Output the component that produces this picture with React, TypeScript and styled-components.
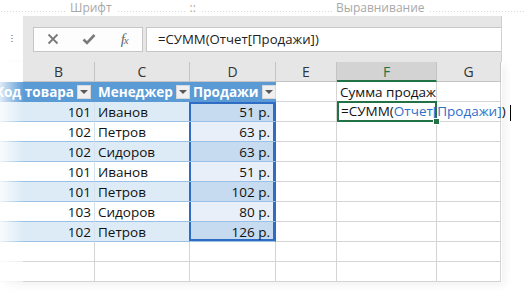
import React from "react";
import styled, { createGlobalStyle, css } from "styled-components";

const GlobalStyle = createGlobalStyle`
  html, body { margin: 0; padding: 0; background: #fff; }
  body {
    width: 524px;
    height: 294px;
    overflow: hidden;
    font-family: "Open Sans", "Noto Sans", sans-serif;
  }
`;

const Shot = styled.div`
  position: relative;
  width: 524px;
  height: 294px;
  overflow: hidden;
  background: #fff;
`;

/* ribbon group labels */
const RibbonStrip = styled.div`
  height: 16px;
  display: flex;
  align-items: center;
  font-size: 12px;
  color: #a8a8a8;
  background-image: linear-gradient(to right, #d9d9d9 50%, transparent 50%);
  background-size: 3px 1px;
  background-repeat: repeat-x;
  background-position: 25px 11px;
`;

const RibbonLabel = styled.span<{ $left: number }>`
  margin-left: ${(p) => p.$left}px;
  padding: 0 4px;
  background: #fff;
  line-height: 16px;
`;

/* formula bar */
const FormulaRow = styled.div`
  display: flex;
  height: 46px;
`;

const Gutter = styled.div`
  width: 23px;
  display: flex;
  align-items: center;
  justify-content: center;
`;

const Grip = styled.div`
  width: 2px;
  height: 9px;
  background-image: linear-gradient(to bottom, #9aaac4 50%, transparent 50%);
  background-size: 2px 3px;
`;

const FormulaArea = styled.div`
  width: 479px;
  background: #e6e6e6;
  display: flex;
  align-items: center;
  padding-left: 10px;
  box-sizing: border-box;
  border-right: 1px solid #d0d0d0;
`;

const NameBox = styled.div`
  width: 110px;
  height: 25px;
  box-sizing: border-box;
  border: 1px solid #c6c6c6;
  background: #fdfdfd;
  display: flex;
  padding-left: 1px;
`;

const BarButton = styled.div`
  width: 36px;
  display: flex;
  align-items: center;
  justify-content: center;
  color: #777;
`;

const Fx = styled.span`
  font-family: "Liberation Serif", serif;
  font-style: italic;
  font-size: 15px;
  color: #666;
  letter-spacing: -1px;
  small {
    font-size: 11px;
  }
`;

const FormulaInput = styled.div`
  flex: 1;
  height: 25px;
  margin-left: 3px;
  box-sizing: border-box;
  border: 1px solid #c6c6c6;
  border-right: none;
  background: #fff;
  padding-left: 11px;
  display: flex;
  align-items: center;
  font-size: 13.2px;
  color: #222;
`;

/* sheet */
const Sheet = styled.div`
  display: grid;
  grid-template-columns: 23px 72px 95px 86px 61px 100px 64px;
  grid-auto-rows: 20px;
  width: 501px;
  font-size: 13.5px;
  color: #111;
`;

const ColHead = styled.div<{ $active?: boolean; $blank?: boolean }>`
  display: flex;
  align-items: center;
  justify-content: center;
  box-sizing: border-box;
  background: ${(p) => (p.$blank ? "#fff" : p.$active ? "#d3d3d3" : "#e6e6e6")};
  border-right: ${(p) => (p.$blank ? "none" : "1px solid #c4c4c4")};
  border-bottom: ${(p) =>
    p.$blank ? "none" : p.$active ? "2px solid #217346" : "1px solid #c4c4c4"};
  color: ${(p) => (p.$active ? "#217346" : "#333")};
  font-size: 14px;
`;

type CellProps = {
  $bg?: string;
  $line?: string;
  $vline?: string;
  $right?: boolean;
  $head?: boolean;
  $selSide?: boolean;
  $selTop?: boolean;
  $selBottom?: boolean;
};

const Cell = styled.div<CellProps>`
  position: relative;
  display: flex;
  align-items: center;
  justify-content: ${(p) => (p.$right ? "flex-end" : "flex-start")};
  box-sizing: border-box;
  padding: 0 3px;
  white-space: nowrap;
  background: ${(p) => p.$bg || "#fff"};
  border-bottom: 1px solid ${(p) => p.$line || "#d4d4d4"};
  border-right: 1px solid ${(p) => p.$vline || "#d4d4d4"};
  ${(p) =>
    p.$head &&
    css`
      color: #fff;
      font-weight: 700;
      border-right-color: ${p.$bg};
    `}
  ${(p) =>
    p.$selSide &&
    css`
      box-shadow: inset 2px 0 0 #2f6cc4, inset -2px 0 0 #2f6cc4
        ${p.$selTop ? ", inset 0 2px 0 #2f6cc4" : ""}
        ${p.$selBottom ? ", inset 0 -2px 0 #2f6cc4" : ""};
      border-right-color: #2f6cc4;
      margin-left: -1px;
      padding-right: 5px;
    `}
`;

const Edge = styled.div<{ $bg?: string; $line?: string }>`
  background: ${(p) => p.$bg || "#fff"};
  border-bottom: 1px solid ${(p) => p.$line || "#ececec"};
  box-sizing: border-box;
`;

const FilterButton = styled.span`
  width: 14px;
  height: 14px;
  margin-left: 3px;
  box-sizing: border-box;
  background: #f0f0f0;
  border: 1px solid #d8d8d8;
  display: inline-flex;
  align-items: center;
  justify-content: center;
  flex-shrink: 0;
  &::after {
    content: "";
    border-left: 4px solid transparent;
    border-right: 4px solid transparent;
    border-top: 4px solid #595959;
  }
`;

const HeadText = styled.span`
  overflow: visible;
`;

const ActiveCell = styled(Cell)`
  z-index: 2;
  overflow: visible;
  border-right-color: transparent;
  background: transparent;
  &::before {
    content: "";
    position: absolute;
    left: 0;
    top: -1px;
    right: -1px;
    bottom: -1px;
    border: 2px solid #217346;
  }
  &::after {
    content: "";
    position: absolute;
    right: -4px;
    bottom: -4px;
    width: 5px;
    height: 5px;
    background: #217346;
    border: 1px solid #fff;
  }
`;

const CellFormula = styled.span`
  position: relative;
  z-index: 1;
  padding-left: 1px;
`;

const Ref = styled.span`
  color: #2e6fc9;
`;

const Caret = styled.span`
  display: inline-block;
  vertical-align: middle;
  width: 1px;
  height: 16px;
  margin-left: 4px;
  background: #000;
`;

const LeftFade = styled.div`
  position: absolute;
  left: 0;
  top: 62px;
  width: 24px;
  height: 232px;
  background: linear-gradient(to right, rgba(255, 255, 255, 0.8), rgba(255, 255, 255, 0));
  pointer-events: none;
`;

const Frame = styled.div`
  box-shadow: 3px 3px 8px rgba(0, 0, 0, 0.06);
  width: 502px;
`;

const CloseIcon = () => (
  <svg width="12" height="12" viewBox="0 0 12 12">
    <path d="M1.5 1.5 L10.5 10.5 M10.5 1.5 L1.5 10.5" stroke="#7a7a7a" strokeWidth="1.8" fill="none" />
  </svg>
);

const CheckIcon = () => (
  <svg width="14" height="12" viewBox="0 0 14 12">
    <path d="M1.5 6.5 L5 10 L12.5 2" stroke="#7a7a7a" strokeWidth="2.6" fill="none" />
  </svg>
);

const rows = [
  ["101", "Иванов", "51 р."],
  ["102", "Петров", "63 р."],
  ["102", "Сидоров", "63 р."],
  ["101", "Иванов", "51 р."],
  ["101", "Петров", "102 р."],
  ["103", "Сидоров", "80 р."],
  ["102", "Петров", "126 р."],
];

const App: React.FC = () => {
  const last = rows.length - 1;

  return (
    <Shot>
      <GlobalStyle />
      <RibbonStrip>
        <RibbonLabel $left={66}>Шрифт</RibbonLabel>
        <RibbonLabel $left={70}>::</RibbonLabel>
        <RibbonLabel $left={132}>Выравнивание</RibbonLabel>
      </RibbonStrip>

      <FormulaRow>
        <Gutter>
          <Grip />
        </Gutter>
        <FormulaArea>
          <NameBox>
            <BarButton><CloseIcon /></BarButton>
            <BarButton><CheckIcon /></BarButton>
            <BarButton>
              <Fx>f<small>x</small></Fx>
            </BarButton>
          </NameBox>
          <FormulaInput>=СУММ(Отчет[Продажи])</FormulaInput>
        </FormulaArea>
      </FormulaRow>

      <Frame>
        <Sheet>
          <ColHead $blank />
          <ColHead>B</ColHead>
          <ColHead>C</ColHead>
          <ColHead>D</ColHead>
          <ColHead>E</ColHead>
          <ColHead $active>F</ColHead>
          <ColHead>G</ColHead>

          <Edge $bg="#5b9bd5" $line="#5b9bd5" />
          <Cell $head $bg="#5b9bd5" $line="#5b9bd5" $right>
            <HeadText>Код товара</HeadText>
            <FilterButton />
          </Cell>
          <Cell $head $bg="#5b9bd5" $line="#5b9bd5">
            <HeadText>Менеджер</HeadText>
            <span style={{ flex: 1 }} />
            <FilterButton />
          </Cell>
          <Cell $head $bg="#5b9bd5" $line="#5b9bd5">
            <HeadText>Продажи</HeadText>
            <span style={{ flex: 1 }} />
            <FilterButton />
          </Cell>
          <Cell />
          <Cell>Сумма продаж</Cell>
          <Cell />

          {rows.map(([code, name, sum], i) => {
            const striped = i % 2 === 0;
            const bg = striped ? "#ddebf7" : "#fff";
            const sel = striped ? "#c6daf0" : "#e8eff9";
            return (
              <React.Fragment key={i}>
                <Edge $bg={bg} $line="#9bc2e6" />
                <Cell $bg={bg} $line="#9bc2e6" $vline="#d6e2ee" $right>
                  {code}
                </Cell>
                <Cell $bg={bg} $line="#9bc2e6" $vline="#d6e2ee">
                  {name}
                </Cell>
                <Cell
                  $bg={sel}
                  $line="#9bc2e6"
                  $right
                  $selSide
                  $selTop={i === 0}
                  $selBottom={i === last}
                >
                  {sum}
                </Cell>
                <Cell />
                {i === 0 ? (
                  <ActiveCell>
                    <CellFormula>
                      =СУММ(<Ref>Отчет[Продажи]</Ref>)<Caret />
                    </CellFormula>
                  </ActiveCell>
                ) : (
                  <Cell />
                )}
                <Cell $vline={i === 0 ? "#d4d4d4" : undefined} />
              </React.Fragment>
            );
          })}

          {[0, 1].map((r) => (
            <React.Fragment key={"e" + r}>
              <Edge />
              <Cell />
              <Cell />
              <Cell />
              <Cell />
              <Cell />
              <Cell />
            </React.Fragment>
          ))}
        </Sheet>
      </Frame>
      <LeftFade />
    </Shot>
  );
};

export default App;
